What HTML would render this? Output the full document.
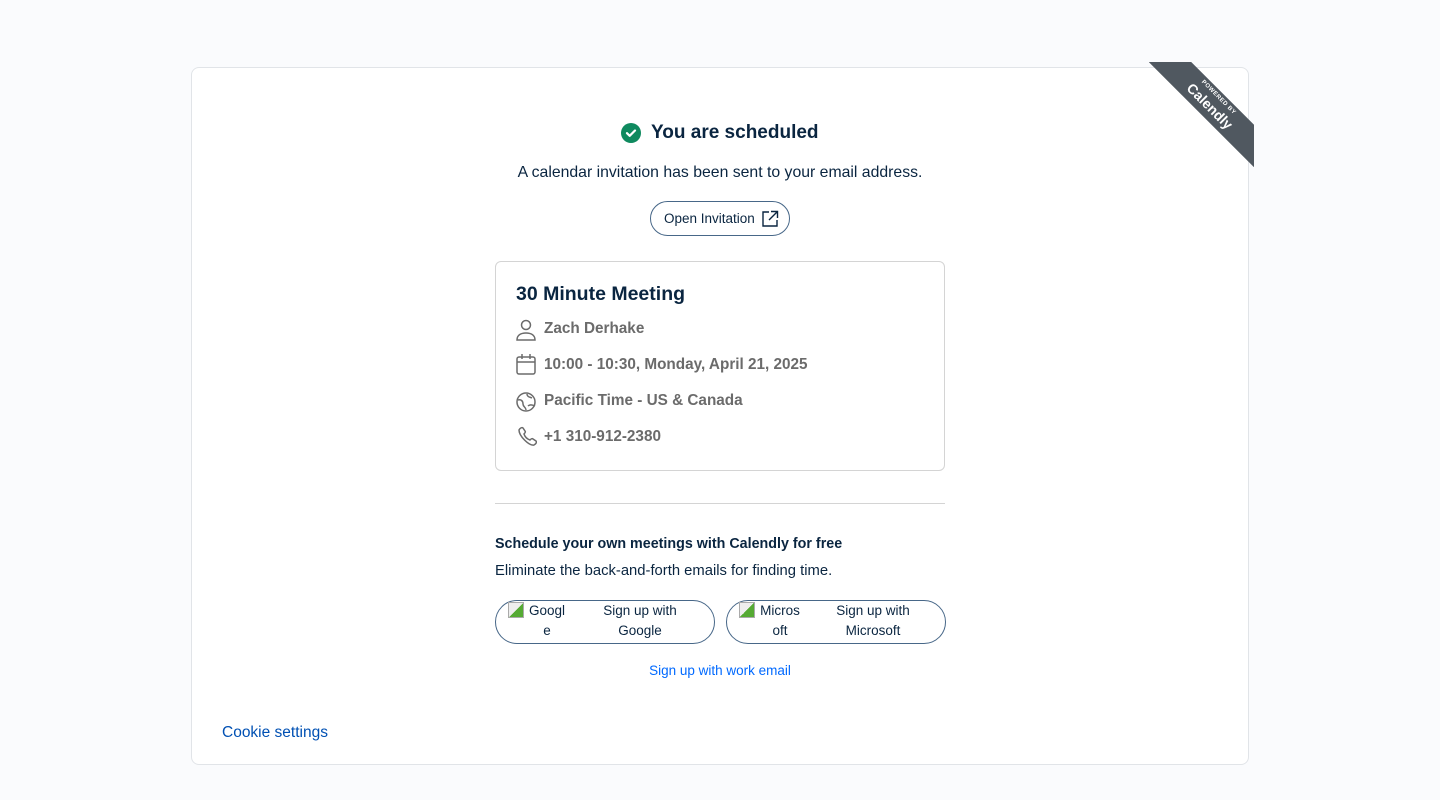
<!DOCTYPE html>
<html><head><style>
*{box-sizing:border-box;margin:0;padding:0}
body{width:1440px;height:800px;background:#fafbfd;font-family:"Liberation Sans",sans-serif;color:#0a2540;position:relative;overflow:hidden}
.card{position:absolute;left:191px;top:67px;width:1058px;height:698px;background:#fff;border:1px solid #e1e4e8;border-radius:8px}
.rib{position:absolute;left:1149px;top:62px;width:105px;height:105px;overflow:hidden}
.band{position:absolute;left:-37px;top:27px;width:200px;height:30px;background:#505860;transform:rotate(45deg);color:#fff;text-align:center}
.band .p{font-size:6px;font-weight:bold;letter-spacing:.5px;line-height:8px;padding-top:2px}
.band .q{font-size:14px;font-weight:bold;line-height:16px}
.abs{position:absolute}
.c{text-align:center}
</style></head><body>
<div class="card"></div>
<div class="rib"><div class="band"><div class="p">POWERED BY</div><div class="q">Calendly</div></div></div>
<div class="abs" style="left:621px;top:123px;width:20px;height:20px;border-radius:50%;background:#0f8a5f">
<svg width="20" height="20" viewBox="0 0 20 20"><path d="M6 10.2l2.7 2.6L14 7.5" fill="none" stroke="#fff" stroke-width="2.2" stroke-linecap="round" stroke-linejoin="round"/></svg></div>
<div class="abs" style="left:651px;top:122px;font-size:19px;font-weight:bold;line-height:22px">You are scheduled</div>
<div class="abs c" style="left:420px;width:600px;top:164px;font-size:15.8px;line-height:18px">A calendar invitation has been sent to your email address.</div>
<div class="abs" style="left:650px;top:201px;width:140px;height:35px;border:1px solid #476788;border-radius:18px;font-size:13.5px;line-height:33px;padding-left:13px">Open Invitation
<svg class="abs" style="left:110px;top:8px" width="18" height="18" viewBox="0 0 18 18"><path d="M8 2H2v14h14v-6M10 1.5h6.5V8M16.5 1.5L8 10" fill="none" stroke="#0a2540" stroke-width="1.4"/></svg></div>
<div class="abs" style="left:495px;top:261px;width:450px;height:210px;border:1px solid #d4d4d4;border-radius:6px"></div>
<div class="abs" style="left:516px;top:282px;font-size:19.5px;font-weight:bold;line-height:24px">30 Minute Meeting</div>
<div class="abs" style="left:544px;top:319px;font-size:15.3px;font-weight:bold;color:#6b6b6b;line-height:20px">Zach Derhake</div>
<div class="abs" style="left:544px;top:355px;font-size:15.3px;font-weight:bold;color:#6b6b6b;line-height:20px">10:00 - 10:30, Monday, April 21, 2025</div>
<div class="abs" style="left:544px;top:391px;font-size:15.3px;font-weight:bold;color:#6b6b6b;line-height:20px">Pacific Time - US &amp; Canada</div>
<div class="abs" style="left:544px;top:427px;font-size:15.3px;font-weight:bold;color:#6b6b6b;line-height:20px">+1 310-912-2380</div>
<svg class="abs" style="left:515px;top:318px" width="22" height="140" viewBox="0 0 22 140" fill="none" stroke="#6b6b6b" stroke-width="1.5">
<circle cx="11" cy="7" r="4.5"/><path d="M2 22c0-5 4-7 9-7s9 2 9 7z"/>
<rect x="2" y="39" width="18" height="17" rx="2"/><path d="M2 44h18M7 36v5M15 36v5"/>
<circle cx="11" cy="84" r="9"/><path d="M3 82c3-1 5 1 5 4s3 3 3 6M12 76c0 3 3 3 5 4M13 88c2-2 5-1 7 0"/>
<path d="M4 112c1-2 3-3 4-2l2 3c1 1 0 2-1 3 1 3 3 5 6 6 1-1 2-2 3-1l3 2c1 1 0 3-2 4-5 1-15-9-15-15z"/></svg>
<div class="abs" style="left:495px;top:503px;width:450px;height:1px;background:#d4d4d4"></div>
<div class="abs" style="left:495px;top:535px;font-size:14.3px;font-weight:bold;line-height:18px">Schedule your own meetings with Calendly for free</div>
<div class="abs" style="left:495px;top:562px;font-size:14.8px;line-height:18px">Eliminate the back-and-forth emails for finding time.</div>
<div class="abs" style="left:495px;top:600px;width:220px;height:44px;border:1px solid #476788;border-radius:22px;font-size:13.5px;line-height:20px">
<span class="abs" style="left:12px;top:1px;width:16px;height:16px;border:1px solid #aaa;background:linear-gradient(135deg,#eee 50%,#5a3 50%)"></span>
<span class="abs c" style="left:30px;top:0;width:42px;word-break:break-all">Google</span>
<span class="abs c" style="left:99px;top:0;width:90px">Sign up with Google</span></div>
<div class="abs" style="left:726px;top:600px;width:220px;height:44px;border:1px solid #476788;border-radius:22px;font-size:13.5px;line-height:20px">
<span class="abs" style="left:12px;top:1px;width:16px;height:16px;border:1px solid #aaa;background:linear-gradient(135deg,#eee 50%,#5a3 50%)"></span>
<span class="abs c" style="left:30px;top:0;width:46px;word-break:break-all">Microsoft</span>
<span class="abs c" style="left:101px;top:0;width:90px">Sign up with Microsoft</span></div>
<div class="abs c" style="left:495px;width:450px;top:663px;font-size:13.5px;color:#0069ff;line-height:16px">Sign up with work email</div>
<div class="abs" style="left:222px;top:724px;font-size:15.5px;color:#0050b3;line-height:18px">Cookie settings</div>
</body></html>
